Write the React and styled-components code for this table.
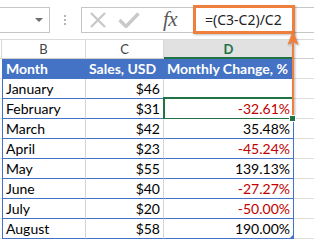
import React from 'react'
import styled, { createGlobalStyle } from 'styled-components'

const GlobalStyle = createGlobalStyle`
  html, body {
    margin: 0;
    padding: 0;
    background: #ffffff;
  }
  body {
    font-family: 'Lato', 'Liberation Sans', sans-serif;
  }
`

const COLS = '2px 84px 78px 130px 20px'

const Sheet = styled.div`
  position: relative;
  width: 314px;
  height: 240px;
  overflow: hidden;
  background: #ffffff;
`

const FormulaBar = styled.div`
  display: flex;
  align-items: center;
  height: 39px;
`

const NameBox = styled.div`
  box-sizing: border-box;
  width: 52px;
  height: 26px;
  margin-left: -2px;
  border: 1px solid #c6c6c6;
  display: flex;
  align-items: center;
  justify-content: flex-end;
  padding-right: 6px;
`

const DropArrow = styled.div`
  width: 0;
  height: 0;
  border-left: 4px solid transparent;
  border-right: 4px solid transparent;
  border-top: 4px solid #6d6d6d;
`

const Dots = styled.div`
  display: flex;
  flex-direction: column;
  gap: 2px;
  margin: 0 15px 0 14px;

  span {
    width: 2px;
    height: 2px;
    background: #b4b4b4;
  }
`

const EditBox = styled.div`
  box-sizing: border-box;
  flex: 1;
  height: 26px;
  margin-right: -4px;
  border: 1px solid #c6c6c6;
  border-right: none;
  display: flex;
  align-items: center;
  padding-left: 7px;
`

const IconSlot = styled.div`
  display: flex;
  align-items: center;
  justify-content: center;
  width: ${p => p.$w}px;
  margin-right: ${p => p.$gap}px;
`

const Fx = styled.div`
  width: 18px;
  margin: 0 12px 0 23px;
  font-family: 'Liberation Serif', 'DejaVu Serif', serif;
  font-style: italic;
  font-size: 21px;
  color: #5a5a5a;
  letter-spacing: -0.5px;
  line-height: 1;
`

const Formula = styled.div`
  box-sizing: border-box;
  width: 102px;
  height: 29px;
  border: 3px solid #ef7f3d;
  box-shadow: 1px 1px 2px rgba(0, 0, 0, 0.25);
  display: flex;
  align-items: center;
  padding-left: 9px;
  font-family: 'Noto Sans', 'Open Sans', sans-serif;
  font-size: 14px;
  color: #222;
`

const Row = styled.div`
  display: grid;
  grid-template-columns: ${COLS};
  height: 20px;
`

const ColHead = styled.div`
  box-sizing: border-box;
  display: flex;
  align-items: center;
  justify-content: center;
  border-top: 1px solid #dadada;
  border-right: ${p => (p.$last ? 'none' : '1px solid #d8d8d8')};
  border-bottom: ${p => (p.$active ? '2px solid #217346' : '1px solid #d0d0d0')};
  background: ${p => (p.$active ? '#e1e1e1' : '#ffffff')};
  color: ${p => (p.$active ? '#217346' : '#444444')};
  font-weight: ${p => (p.$active ? 700 : 400)};
  font-size: 13px;
`

const Cell = styled.div`
  position: relative;
  box-sizing: border-box;
  display: flex;
  align-items: center;
  justify-content: ${p => (p.$right ? 'flex-end' : 'flex-start')};
  padding: 0 ${p => (p.$right ? 3 : 2)}px 0 ${p => (p.$right ? 0 : 3)}px;
  font-size: 14px;
  white-space: nowrap;
  color: ${p => (p.$neg ? '#c00000' : '#000000')};
  background: ${p => (p.$head ? '#4472c4' : '#ffffff')};
  border-bottom: 1px solid #4472c4;
  ${p => p.$head && 'color: #ffffff; font-weight: 700;'}
  ${p => p.$first && 'border-left: 1px solid #4472c4;'}
  ${p => p.$grid && !p.$head && 'border-right: 1px solid #d4d4d4;'}
  ${p => p.$end && 'border-right: 1px solid #4472c4;'}

  ${p =>
    p.$selected &&
    `
    &::after {
      content: '';
      position: absolute;
      left: -1px;
      top: -2px;
      right: -1px;
      bottom: -2px;
      border: 2px solid #217346;
    }
    &::before {
      content: '';
      position: absolute;
      right: -3px;
      bottom: -4px;
      width: 5px;
      height: 5px;
      background: #217346;
      border: 1px solid #ffffff;
      z-index: 2;
    }
  `}
`

const Blank = styled.div`
  box-sizing: border-box;
  border-bottom: 1px solid #dedede;
`

const Corner = styled.div`
  position: absolute;
  left: 290px;
  top: 234px;
  width: 0;
  height: 0;
  border-left: 4px solid transparent;
  border-bottom: 4px solid #4472c4;
`

const Arrow = styled.svg`
  position: absolute;
  left: 286px;
  top: 29px;
  overflow: visible;
  filter: drop-shadow(1px 1px 1px rgba(0, 0, 0, 0.3));
`

const rows = [
  ['January', '$46', ''],
  ['February', '$31', '-32.61%'],
  ['March', '$42', '35.48%'],
  ['April', '$23', '-45.24%'],
  ['May', '$55', '139.13%'],
  ['June', '$40', '-27.27%'],
  ['July', '$20', '-50.00%'],
  ['August', '$58', '190.00%'],
]

export default function App() {
  return (
    <Sheet>
      <GlobalStyle />
      <FormulaBar>
        <NameBox>
          <DropArrow />
        </NameBox>
        <Dots>
          <span />
          <span />
          <span />
        </Dots>
        <EditBox>
          <IconSlot $w={18} $gap={11}>
            <svg width="18" height="16" viewBox="0 0 18 16">
              <path d="M2 1 L16 15 M16 1 L2 15" stroke="#c9c9c9" strokeWidth="2.4" fill="none" />
            </svg>
          </IconSlot>
          <IconSlot $w={22} $gap={0}>
            <svg width="22" height="16" viewBox="0 0 22 16">
              <path d="M1.5 8 L8 14.5 L20.5 1.5" stroke="#c9c9c9" strokeWidth="3.4" fill="none" />
            </svg>
          </IconSlot>
          <Fx>fx</Fx>
          <Formula>=(C3-C2)/C2</Formula>
        </EditBox>
      </FormulaBar>

      <Row>
        <ColHead />
        <ColHead>B</ColHead>
        <ColHead>C</ColHead>
        <ColHead $active>D</ColHead>
        <ColHead $last />
      </Row>

      <Row>
        <Blank />
        <Cell $head $first>Month</Cell>
        <Cell $head>Sales, USD</Cell>
        <Cell $head $end>Monthly Change, %</Cell>
        <Blank />
      </Row>

      {rows.map(([m, s, c], i) => (
        <Row key={m}>
          <Blank />
          <Cell $first $grid>{m}</Cell>
          <Cell $right $grid>{s}</Cell>
          <Cell $right $end $neg={c.startsWith('-')} $selected={i === 1}>
            {c}
          </Cell>
          <Blank />
        </Row>
      ))}

      <Corner />

      <Arrow width="14" height="92" viewBox="0 0 14 92">
        <path d="M7 14 L7 90" stroke="#ef7f3d" strokeWidth="2" />
        <path d="M7 1 L1.5 16 L7 13 L12.5 16 Z" fill="#ef7f3d" />
      </Arrow>
    </Sheet>
  )
}
